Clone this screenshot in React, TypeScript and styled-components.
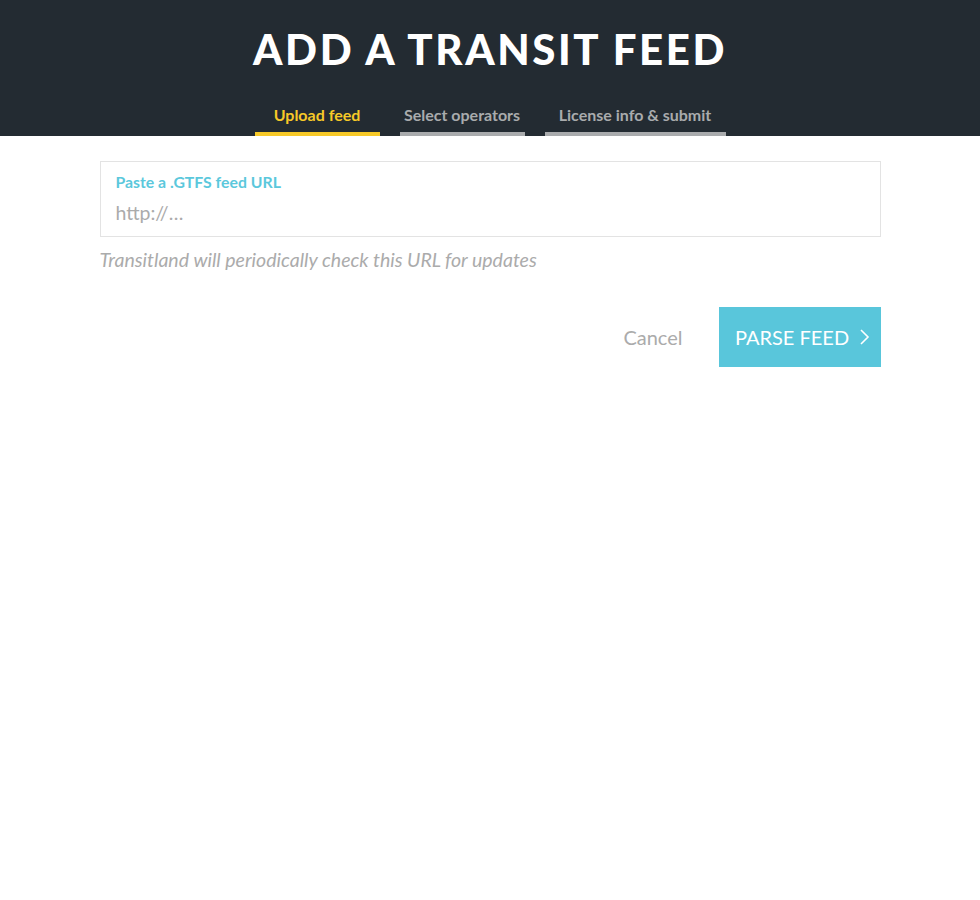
import styled, { createGlobalStyle } from 'styled-components';

const GlobalStyle = createGlobalStyle`
  body {
    margin: 0;
    background: #fff;
    font-family: Lato, 'Open Sans', sans-serif;
  }
`;

const Header = styled.header`
  background: #232b32;
  display: flex;
  flex-direction: column;
  align-items: center;
  height: 136px;
`;
const Title = styled.h1`
  margin: 24px 0 0;
  font-family: Lato, sans-serif;
  font-weight: 900;
  font-size: 42px;
  letter-spacing: 2.6px;
  line-height: 50px;
  color: #fff;
`;
const Tabs = styled.nav`
  display: flex;
  gap: 20px;
  margin-top: 27px;
`;
const Tab = styled.div<{ active?: boolean; width: number }>`
  width: ${(props) => props.width}px;
  height: 35px;
  box-sizing: border-box;
  display: flex;
  align-items: flex-start;
  justify-content: center;
  padding-top: 4px;
  font-size: 16px;
  font-weight: 700;
  color: ${(props) => (props.active ? '#f7c928' : '#a9abad')};
  border-bottom: 4px solid ${(props) => (props.active ? '#f7c928' : '#a9abad')};
`;

const Main = styled.main`
  width: 781px;
  margin: 25px auto 0;
`;
const Field = styled.div`
  border: 1px solid #e3e3e3;
  height: 76px;
  box-sizing: border-box;
  padding: 10px 15px 0;
`;
const Label = styled.label`
  display: block;
  font-size: 15.8px;
  font-weight: 700;
  color: #5bc8dc;
  line-height: 19px;
`;
const Input = styled.input`
  border: none;
  outline: none;
  padding: 0;
  margin-top: 10px;
  width: 100%;
  font-family: Lato, sans-serif;
  font-size: 19.5px;
  color: #333;
  &::placeholder {
    color: #ababab;
  }
`;
const Help = styled.p`
  margin: 11px 0 0;
  font-style: italic;
  font-size: 19.5px;
  color: #ababab;
`;
const Actions = styled.div`
  display: flex;
  justify-content: flex-end;
  align-items: center;
  gap: 36px;
  margin-top: 36px;
`;
const CancelBtn = styled.button`
  background: none;
  border: none;
  padding: 0;
  font-family: Lato, sans-serif;
  font-size: 20px;
  color: #ababab;
  cursor: pointer;
`;
const PrimaryBtn = styled.button`
  background: #59c6db;
  border: none;
  height: 60px;
  width: 162px;
  display: flex;
  align-items: center;
  justify-content: center;
  gap: 9px;
  padding: 0 0 0 6px;
  font-family: Lato, sans-serif;
  font-size: 20px;
  color: #fff;
  cursor: pointer;
  svg {
    width: 12px;
    height: 18px;
  }
`;

export default function App() {
  return (
    <>
      <GlobalStyle />
      <Header>
        <Title>ADD A TRANSIT FEED</Title>
        <Tabs>
          <Tab active width={125}>Upload feed</Tab>
          <Tab width={125}>Select operators</Tab>
          <Tab width={181}>License info &amp; submit</Tab>
        </Tabs>
      </Header>
      <Main>
        <Field>
          <Label>Paste a .GTFS feed URL</Label>
          <Input placeholder="http://…" />
        </Field>
        <Help>Transitland will periodically check this URL for updates</Help>
        <Actions>
          <CancelBtn>Cancel</CancelBtn>
          <PrimaryBtn>
            PARSE FEED
            <svg viewBox="0 0 12 18" fill="none" stroke="#fff" strokeWidth="1.6">
              <path d="M3 2 L10 9 L3 16" />
            </svg>
          </PrimaryBtn>
        </Actions>
      </Main>
    </>
  );
}
